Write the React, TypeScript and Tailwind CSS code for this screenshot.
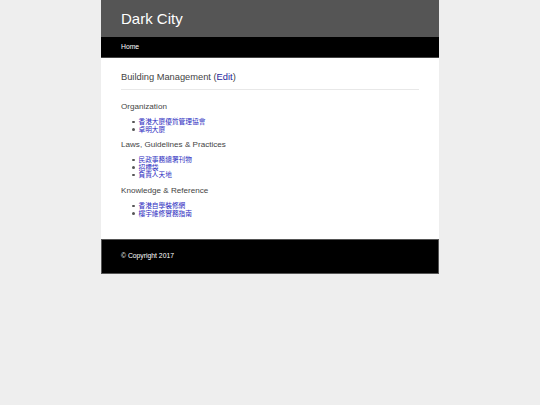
const sections = [
  {
    title: "Organization",
    links: ["香港大廈優質管理協會", "卓明大廈"],
  },
  {
    title: "Laws, Guidelines & Practices",
    links: ["民政事務總署刊物", "招標袋", "負責人天地"],
  },
  {
    title: "Knowledge & Reference",
    links: ["香港自學裝修網", "樓宇維修實務指南"],
  },
]

export default function App() {
  return (
    <div
      className="min-h-screen bg-[#eeeeee]"
      style={{ fontFamily: '"Liberation Sans", Arial, "Noto Sans CJK TC", sans-serif' }}
    >
      <div className="mx-auto w-[338px]">
        <header className="flex h-[37px] items-center bg-[#555555] px-[20px]">
          <h1 className="text-[15px] leading-none text-white">Dark City</h1>
        </header>
        <nav className="flex h-[21px] items-center border-b border-[#444444] bg-black px-[20px]">
          <span className="text-[6.8px] leading-none text-white">Home</span>
        </nav>
        <main className="bg-white px-[20px] pt-[13px] pb-[22px]">
          <h2 className="text-[9.3px] leading-[12px] text-[#444444]">
            Building Management (<a className="text-[#1c1c9c]">Edit</a>)
          </h2>
          <hr className="mt-[6px] mb-[12px] border-t border-[#e8e8e8]" />
          <div className="flex flex-col gap-[7px]">
            {sections.map((s) => (
              <div key={s.title} className="flex flex-col gap-[6px]">
                <h3 className="text-[8.1px] leading-[10px] text-[#444444]">{s.title}</h3>
                <ul className="flex flex-col text-[6.7px] leading-[7.6px] text-[#2a2ac0]">
                  {s.links.map((l) => (
                    <li key={l} className="flex items-center">
                      <span className="ml-[11px] mr-[4px] h-[2.5px] w-[2.5px] rounded-full bg-[#555555]" />
                      <a>{l}</a>
                    </li>
                  ))}
                </ul>
              </div>
            ))}
          </div>
        </main>
        <footer className="flex h-[35px] items-center border border-[#555555] bg-black px-[19px]">
          <span className="text-[6.8px] leading-none text-white">© Copyright 2017</span>
        </footer>
      </div>
    </div>
  )
}
